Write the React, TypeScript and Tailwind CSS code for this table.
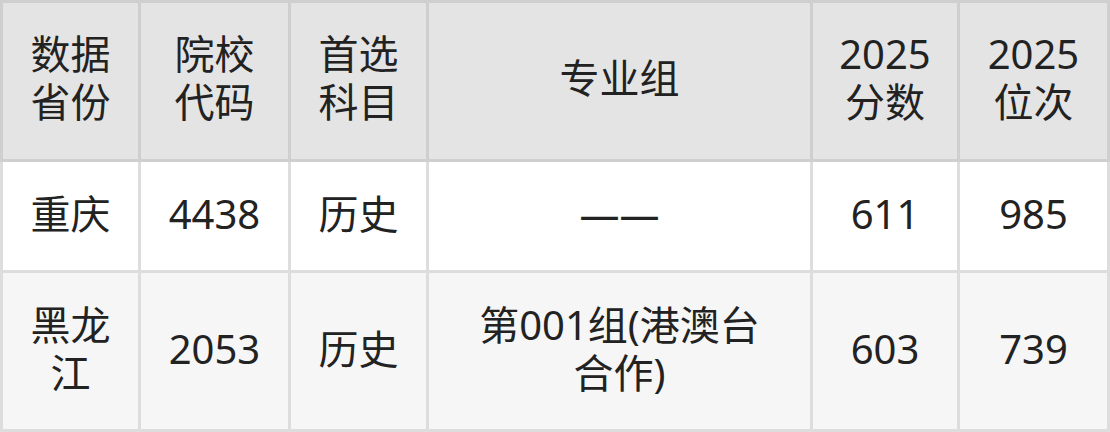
import React from "react";

type Row = { cells: React.ReactNode[]; bg: string };

const headers: React.ReactNode[] = [
  <>数据<br />省份</>,
  <>院校<br />代码</>,
  <>首选<br />科目</>,
  <>专业组</>,
  <>2025<br />分数</>,
  <>2025<br />位次</>,
];

const widths = ["w-[141px]", "w-[150px]", "w-[138px]", "w-[384px]", "w-[147px]", "w-[150px]"];

const rows: Row[] = [
  { cells: ["重庆", "4438", "历史", "——", "611", "985"], bg: "bg-white" },
  {
    cells: [<>黑龙<br />江</>, "2053", "历史", <>第001组(港澳台<br />合作)</>, "603", "739"],
    bg: "bg-[#f6f6f6]",
  },
];

export default function App() {
  return (
    <div className="w-[1110px] h-[432px] bg-white">
      <table
        className="table-fixed w-[1110px] border-separate border-spacing-0 text-[40px] leading-[48px] text-[#222]"
        style={{ fontFamily: '"Noto Sans", "Noto Sans CJK SC", sans-serif' }}
      >
        <thead>
          <tr>
            {headers.map((h, i) => (
              <th
                key={i}
                className={
                  "bg-[#e4e4e4] font-normal text-center align-middle px-2 pt-[27px] pb-[33px] border-t-[3px] border-r-[3px] border-b-[3px] border-[#cfcfcf] " +
                  widths[i] +
                  (i === 0 ? " border-l-[3px]" : "")
                }
              >
                {h}
              </th>
            ))}
          </tr>
        </thead>
        <tbody>
          {rows.map((r, ri) => (
            <tr key={ri}>
              {r.cells.map((c, ci) => (
                <td
                  key={ci}
                  className={
                    r.bg +
                    " text-center align-middle px-2 pt-[28px] pb-[32px] border-r-[3px] border-b-[3px] border-[#dddddd]" +
                    (ci === 0 ? " border-l-[3px]" : "")
                  }
                >
                  {c}
                </td>
              ))}
            </tr>
          ))}
        </tbody>
      </table>
    </div>
  );
}
